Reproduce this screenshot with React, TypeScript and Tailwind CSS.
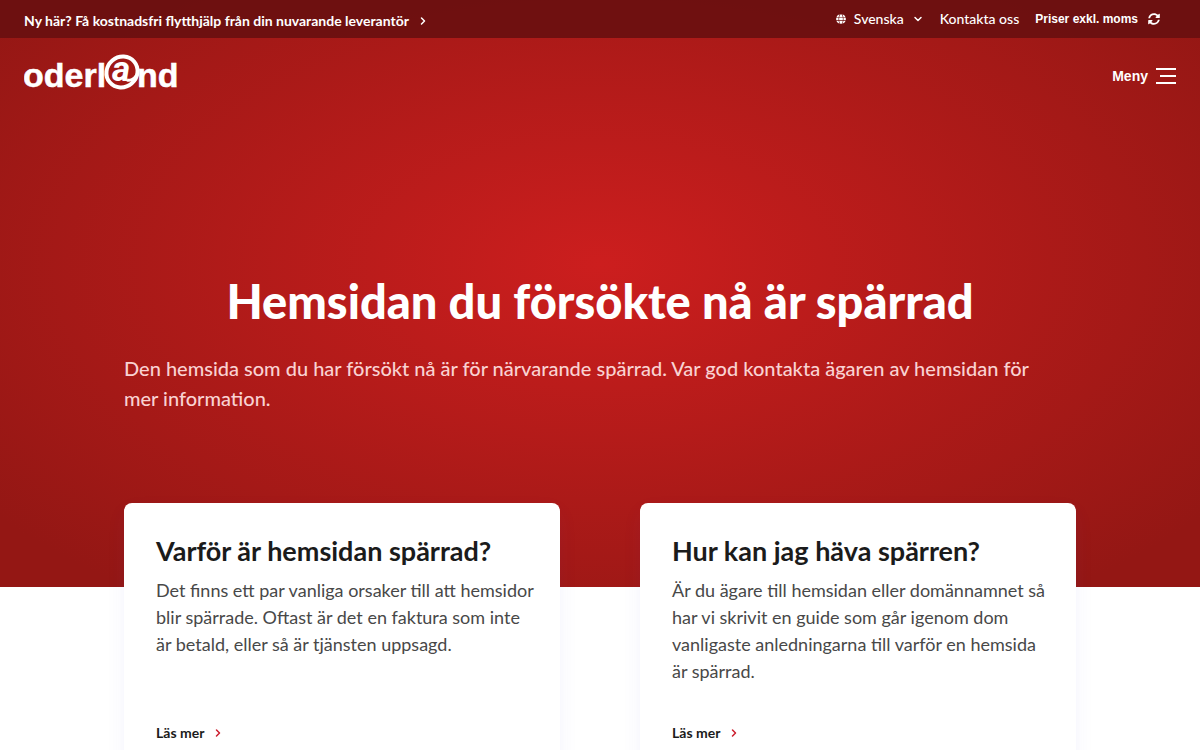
import React from 'react';
import { ChevronDown, ChevronRight } from 'lucide-react';
import { FaGlobe, FaSyncAlt } from 'react-icons/fa';

const cards = [
  {
    title: 'Varför är hemsidan spärrad?',
    text: 'Det finns ett par vanliga orsaker till att hemsidor blir spärrade. Oftast är det en faktura som inte är betald, eller så är tjänsten uppsagd.',
    href: '#varfor',
  },
  {
    title: 'Hur kan jag häva spärren?',
    text: 'Är du ägare till hemsidan eller domännamnet så har vi skrivit en guide som går igenom dom vanligaste anledningarna till varför en hemsida är spärrad.',
    href: '#hava',
  },
];

function Logo() {
  return (
    <svg width="160" height="58" viewBox="0 -6 160 58" fill="#fff" role="img" aria-label="oderland">
      <g fontFamily="Liberation Sans, sans-serif" fontWeight="700" fontSize="34" stroke="#fff" strokeWidth="0.5">
        <text x="-1" y="34">oderl</text>
        <text x="113" y="34">nd</text>
      </g>
      {/* ring around the a */}
      <ellipse cx="98" cy="19" rx="16" ry="15" fill="none" stroke="#fff" strokeWidth="4" transform="rotate(-40 98 19)" />
      <path d="M103 27c3 1 7-1 9-4" fill="none" stroke="#fff" strokeWidth="3" />
      <text x="88" y="28" fontFamily="Roboto, sans-serif" fontWeight="700" fontStyle="italic" fontSize="35">
        a
      </text>
    </svg>
  );
}

function TopBar() {
  return (
    <div className="flex h-[38px] items-center justify-between bg-[#681010]/90 pl-6 pr-10 text-sm leading-5 text-white">
      <a href="#flytt" className="flex items-center gap-2 pt-1 font-bold">
        Ny här? Få kostnadsfri flytthjälp från din nuvarande leverantör
        <ChevronRight className="size-3" strokeWidth={3} />
      </a>
      <div className="flex items-center gap-4">
        <button type="button" className="flex items-center gap-2 font-medium">
          <FaGlobe className="size-[10px]" />
          Svenska
          <ChevronDown className="size-3" strokeWidth={3} />
        </button>
        <a href="#kontakt" className="font-medium">Kontakta oss</a>
        <button type="button" className="flex items-center gap-2.5 font-['Liberation_Sans',sans-serif] text-xs font-bold">
          Priser exkl. moms
          <FaSyncAlt className="size-3" />
        </button>
      </div>
    </div>
  );
}

export default function App() {
  return (
    <div className="bg-white font-['Lato',sans-serif]">
      <div className="bg-[radial-gradient(ellipse_at_50%_45%,#cc1e1e_0%,#941714_90%)] pb-[84px]">
        <TopBar />
        <header className="flex items-center justify-between px-6 pt-[9px]">
          <a href="#start"><Logo /></a>
          <button type="button" className="flex items-center gap-2 font-['Liberation_Sans',sans-serif] text-sm font-bold text-white">
            Meny
            <svg width="20" height="16" viewBox="0 0 20 16" fill="#fff" aria-hidden="true">
              <rect width="20" height="2" />
              <rect x="4" y="7" width="16" height="2" />
              <rect y="14" width="20" height="2" />
            </svg>
          </button>
        </header>
        <section className="mx-auto max-w-[1000px] px-6 pt-[166px] pb-[90px]">
          <h1 className="text-center text-[47px] leading-[60px] font-black text-white">Hemsidan du försökte nå är spärrad</h1>
          <p className="mt-[22px] pr-6 text-xl leading-[30px] font-medium text-[#f9d2d2]">
            Den hemsida som du har försökt nå är för närvarande spärrad. Var god kontakta ägaren av hemsidan för mer information.
          </p>
        </section>
      </div>
      <main className="mx-auto -mt-[84px] grid max-w-[1000px] grid-cols-1 gap-8 px-6 pb-16 md:grid-cols-2 md:gap-20">
        {cards.map((card) => (
          <article key={card.title} className="flex flex-col rounded-lg bg-white py-8 pr-6 pl-8 shadow-[0_8px_20px_rgba(60,60,220,0.06)]">
            <h2 className="text-[27px] leading-8 font-bold text-[#1b1b1b]">{card.title}</h2>
            <p className="mt-[10px] mb-[38px] text-lg leading-[27px] text-[#484848]">{card.text}</p>
            <a href={card.href} className="mt-auto flex items-center gap-2 text-sm leading-5 font-bold text-[#1b1b1b]">
              Läs mer
              <ChevronRight className="size-3 text-[#cc1e2e]" strokeWidth={3} />
            </a>
          </article>
        ))}
      </main>
    </div>
  );
}
